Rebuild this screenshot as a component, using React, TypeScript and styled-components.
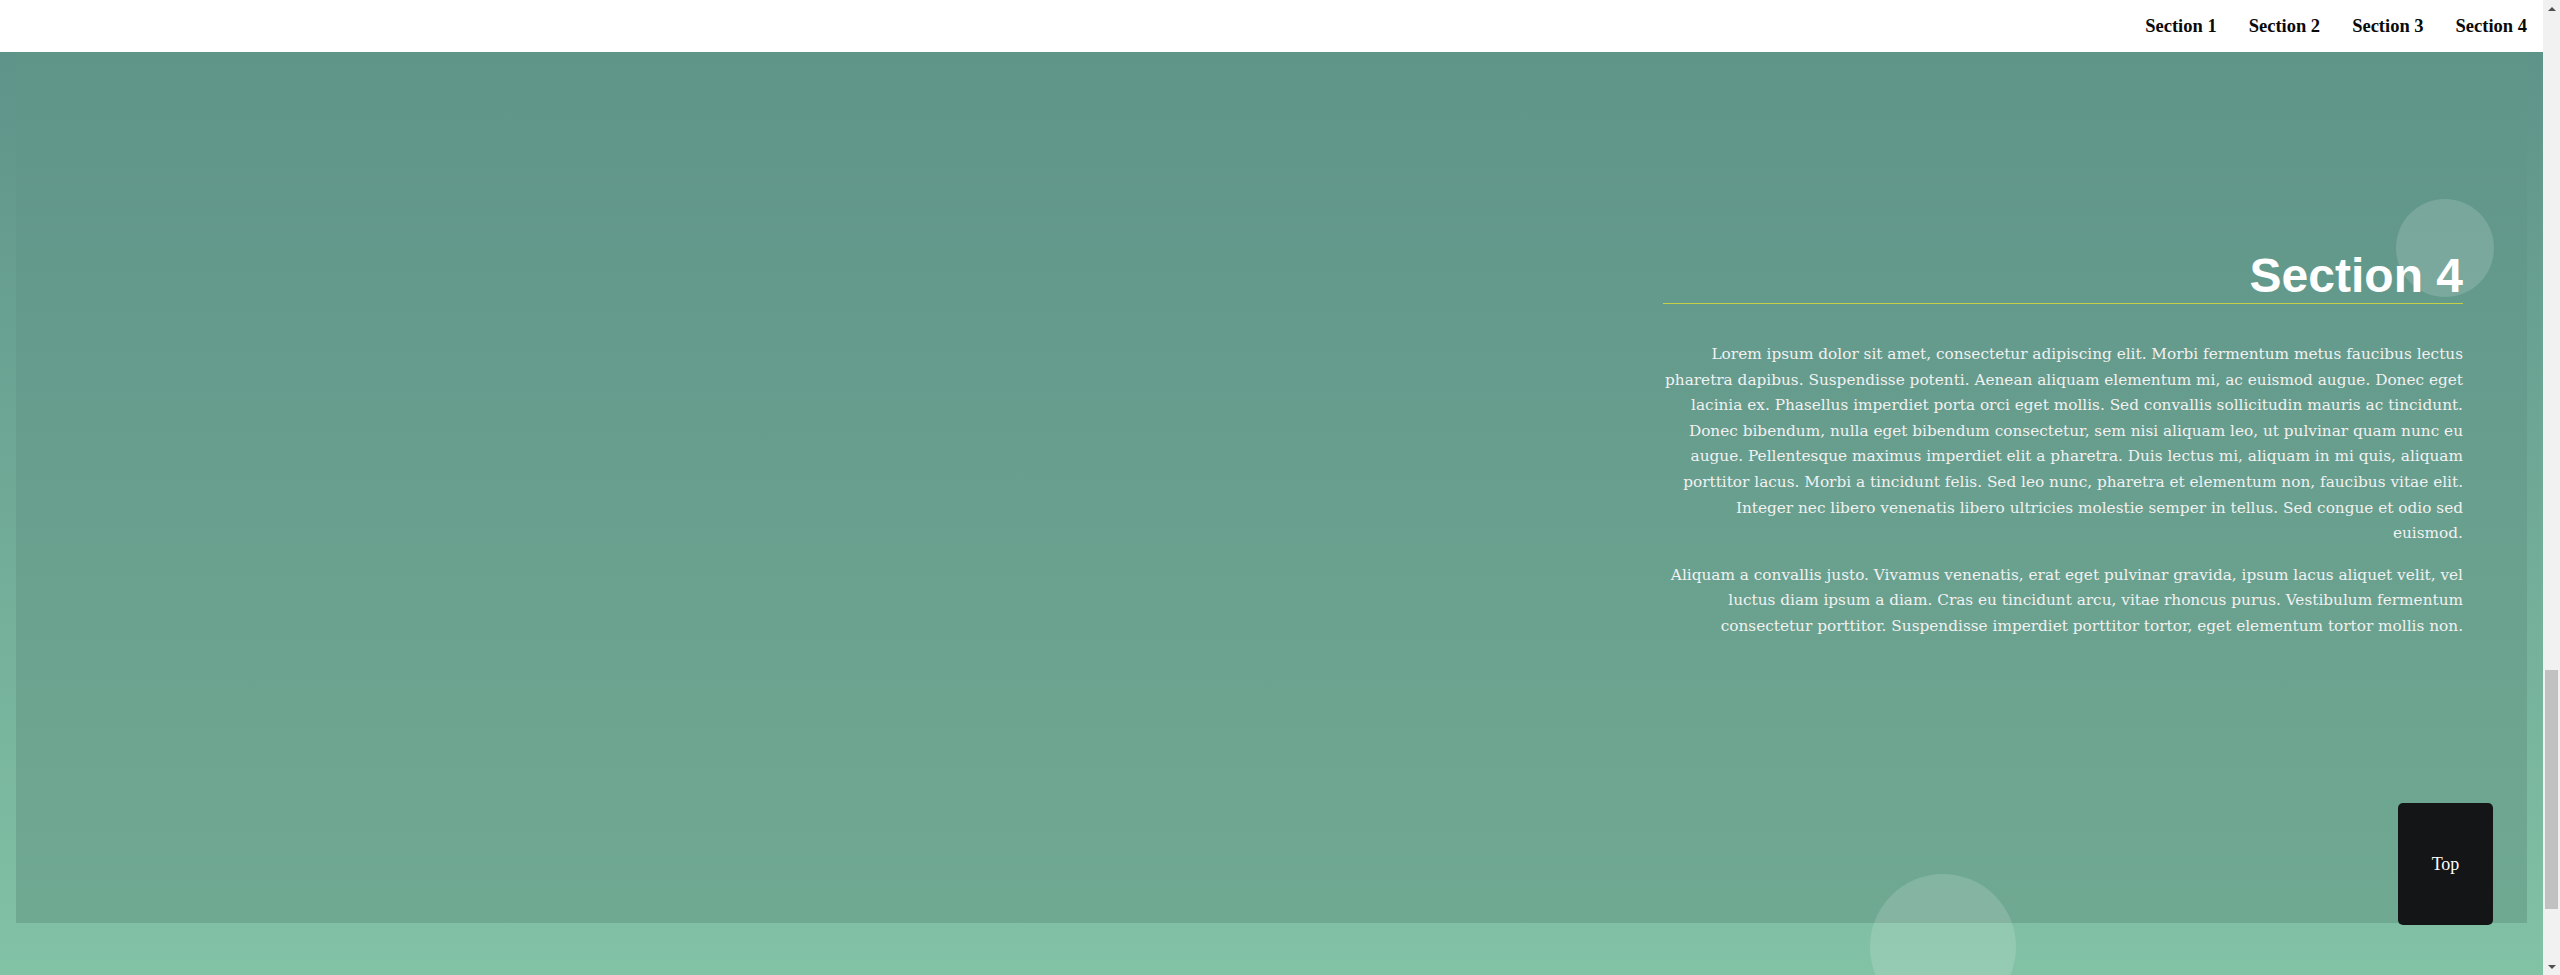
import React from "react";
import styled, { createGlobalStyle } from "styled-components";

const GlobalStyle = createGlobalStyle`
  * { box-sizing: border-box; }
  html, body { margin: 0; padding: 0; overflow: hidden; }
  body {
    font-family: "DejaVu Serif", Georgia, serif;
    color: #f1f1f1;
    background: #ffffff;
  }
`;

const Window = styled.div`
  display: flex;
  width: 100vw;
  height: 100vh;
  overflow: hidden;
`;

const Page = styled.div`
  position: relative;
  flex: 1;
  display: flex;
  flex-direction: column;
  min-width: 0;
`;

const Header = styled.header`
  height: 52px;
  flex: none;
  background: #ffffff;
  display: flex;
  justify-content: flex-end;
`;

const Nav = styled.nav`
  display: flex;
  height: 100%;
`;

const NavLink = styled.a`
  display: flex;
  align-items: center;
  height: 100%;
  padding: 0 16px;
  font-family: "Liberation Serif", "Times New Roman", serif;
  font-weight: 700;
  font-size: 18.5px;
  color: #0a0a0a;
  text-decoration: none;
`;

const Stage = styled.section`
  position: relative;
  flex: 1;
  display: flex;
  padding: 0 16px 52px;
  background: linear-gradient(180deg, #5e9389 0%, #82c2a5 100%);
`;

const Panel = styled.div`
  flex: 1;
  display: flex;
  justify-content: flex-end;
  align-items: flex-start;
  padding: 196px 64px 0;
  background: linear-gradient(180deg, #5f9489 0%, #70a992 100%);
`;

const Bubble = styled.span<{ $size: number }>`
  position: absolute;
  width: ${(p) => p.$size}px;
  height: ${(p) => p.$size}px;
  border-radius: 50%;
  background: rgba(255, 255, 255, 0.15);
  pointer-events: none;
`;

const Column = styled.div`
  position: relative;
  z-index: 1;
  width: 800px;
  text-align: right;
`;

const Title = styled.h2`
  margin: 0;
  font-family: "Liberation Sans", Arial, sans-serif;
  font-weight: 700;
  font-size: 48px;
  line-height: 55px;
  color: #ffffff;
  border-bottom: 1px solid #c6cf48;
`;

const Body = styled.div`
  margin-top: 38px;
`;

const Para = styled.p`
  margin: 0 0 16px;
  font-family: "DejaVu Serif", Georgia, serif;
  font-size: 15.3px;
  line-height: 25.6px;
  color: #f1f1f1;
  white-space: nowrap;
`;

const TopButton = styled.button`
  position: absolute;
  right: 50px;
  bottom: 50px;
  width: 95px;
  height: 122px;
  border: none;
  border-radius: 5px;
  background: #131517;
  color: #ffffff;
  font-family: "Liberation Serif", "Times New Roman", serif;
  font-size: 18px;
  cursor: pointer;
  z-index: 2;
`;

const Scrollbar = styled.div`
  width: 17px;
  flex: none;
  display: flex;
  flex-direction: column;
  background: #f1f1f1;
`;

const ArrowButton = styled.div<{ $dir: "up" | "down" }>`
  height: 17px;
  flex: none;
  display: flex;
  align-items: center;
  justify-content: center;
  &::before {
    content: "";
    width: 0;
    height: 0;
    border-left: 4px solid transparent;
    border-right: 4px solid transparent;
    ${(p) =>
      p.$dir === "up"
        ? "border-bottom: 4px solid #505050;"
        : "border-top: 4px solid #505050;"}
  }
`;

const Track = styled.div`
  position: relative;
  flex: 1;
`;

const Thumb = styled.div`
  position: absolute;
  left: 2px;
  right: 2px;
  background: #c1c1c1;
`;

const paragraphs: string[][] = [
  [
    "Lorem ipsum dolor sit amet, consectetur adipiscing elit. Morbi fermentum metus faucibus lectus",
    "pharetra dapibus. Suspendisse potenti. Aenean aliquam elementum mi, ac euismod augue. Donec eget",
    "lacinia ex. Phasellus imperdiet porta orci eget mollis. Sed convallis sollicitudin mauris ac tincidunt.",
    "Donec bibendum, nulla eget bibendum consectetur, sem nisi aliquam leo, ut pulvinar quam nunc eu",
    "augue. Pellentesque maximus imperdiet elit a pharetra. Duis lectus mi, aliquam in mi quis, aliquam",
    "porttitor lacus. Morbi a tincidunt felis. Sed leo nunc, pharetra et elementum non, faucibus vitae elit.",
    "Integer nec libero venenatis libero ultricies molestie semper in tellus. Sed congue et odio sed",
    "euismod.",
  ],
  [
    "Aliquam a convallis justo. Vivamus venenatis, erat eget pulvinar gravida, ipsum lacus aliquet velit, vel",
    "luctus diam ipsum a diam. Cras eu tincidunt arcu, vitae rhoncus purus. Vestibulum fermentum",
    "consectetur porttitor. Suspendisse imperdiet porttitor tortor, eget elementum tortor mollis non.",
  ],
];

const navItems = ["Section 1", "Section 2", "Section 3", "Section 4"];

// scroll state of the long one-page document shown in the screenshot
const DOC_HEIGHT = 3839;
const SCROLL_TOP = 2664;
const VIEWPORT = 975;
const TRACK = VIEWPORT - 34;
const thumbHeight = Math.round((TRACK * VIEWPORT) / DOC_HEIGHT);
const thumbTop = Math.round(
  (SCROLL_TOP * (TRACK - thumbHeight)) / (DOC_HEIGHT - VIEWPORT)
);

export default function App() {
  return (
    <>
      <GlobalStyle />
      <Window>
        <Page>
          <Header>
            <Nav>
              {navItems.map((label, i) => (
                <NavLink key={label} href={`#section-${i + 1}`}>
                  {label}
                </NavLink>
              ))}
            </Nav>
          </Header>
          <Stage id="section-4">
            <Bubble $size={98} style={{ top: 147, right: 49 }} />
            <Bubble $size={146} style={{ top: 822, left: 1870 }} />
            <Panel>
              <Column>
                <Title>Section 4</Title>
                <Body>
                  {paragraphs.map((lines, pi) => (
                    <Para key={pi}>
                      {lines.map((line, li) => (
                        <React.Fragment key={li}>
                          {line}
                          {li < lines.length - 1 && <br />}
                        </React.Fragment>
                      ))}
                    </Para>
                  ))}
                </Body>
              </Column>
            </Panel>
          </Stage>
          <TopButton type="button">Top</TopButton>
        </Page>
        <Scrollbar aria-hidden="true">
          <ArrowButton $dir="up" />
          <Track>
            <Thumb style={{ top: thumbTop, height: thumbHeight }} />
          </Track>
          <ArrowButton $dir="down" />
        </Scrollbar>
      </Window>
    </>
  );
}
